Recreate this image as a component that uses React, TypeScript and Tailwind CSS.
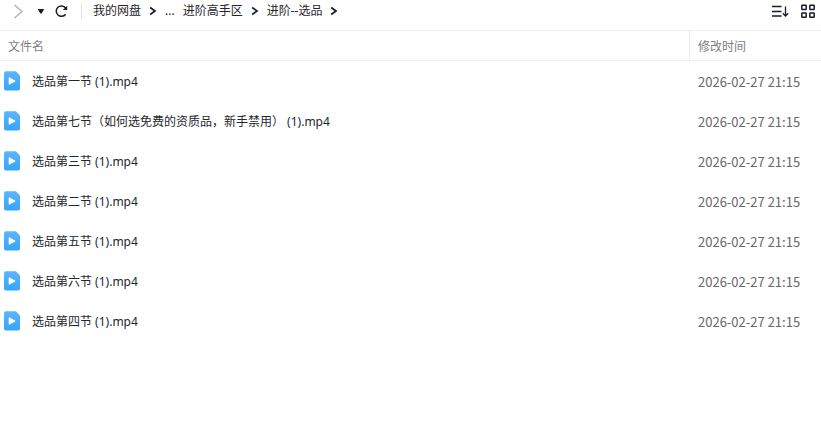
import React from 'react';

type FileItem = {
  name: string;
  modified: string;
};

const files: FileItem[] = [
  { name: '选品第一节 (1).mp4', modified: '2026-02-27 21:15' },
  { name: '选品第七节（如何选免费的资质品，新手禁用） (1).mp4', modified: '2026-02-27 21:15' },
  { name: '选品第三节 (1).mp4', modified: '2026-02-27 21:15' },
  { name: '选品第二节 (1).mp4', modified: '2026-02-27 21:15' },
  { name: '选品第五节 (1).mp4', modified: '2026-02-27 21:15' },
  { name: '选品第六节 (1).mp4', modified: '2026-02-27 21:15' },
  { name: '选品第四节 (1).mp4', modified: '2026-02-27 21:15' },
];

const crumbs = ['我的网盘', '...', '进阶高手区', '进阶--选品'];

const VideoIcon = () => (
  <svg className="shrink-0" width="16" height="20" viewBox="0 0 16 20" aria-hidden="true">
    <defs>
      <linearGradient id="video-fill" x1="0" y1="0" x2="0" y2="1">
        <stop offset="0" stopColor="#5cb6ff" />
        <stop offset="1" stopColor="#35a4fc" />
      </linearGradient>
    </defs>
    <path
      d="M2 .3H11.2a1.6 1.6 0 0 1 1.2.5l3.1 3.1a1.6 1.6 0 0 1 .5 1.2V17.5a2 2 0 0 1-2 2H2a2 2 0 0 1-2-2V2.3a2 2 0 0 1 2-2Z"
      fill="url(#video-fill)"
    />
    <path d="M4.7 6.9v6a.6.6 0 0 0 .9.5l5.4-3a.6.6 0 0 0 0-1l-5.4-3a.6.6 0 0 0-.9.5Z" fill="#fff" />
  </svg>
);

const CrumbArrow = () => (
  <svg width="8" height="10" viewBox="0 0 8 10" fill="none" aria-hidden="true">
    <path d="M1.2 1.5 6 5 1.2 8.5" stroke="#171b2b" strokeWidth="1.7" />
  </svg>
);

const Toolbar = () => (
  <header className="flex items-center border-b border-[#ececee] pb-2 pl-3 pr-[5px]">
    <button type="button" aria-label="前进" className="flex h-[22px] w-3 items-center justify-center">
      <svg width="12" height="16" viewBox="0 0 12 16" fill="none">
        <path d="M2.5 2 10 8.5 2.5 15" stroke="#b4b4b8" strokeWidth="1.5" />
      </svg>
    </button>
    <button type="button" aria-label="历史记录" className="ml-[11px] flex h-[22px] w-3 items-center justify-center">
      <svg width="8" height="6" viewBox="0 0 8 6">
        <path d="M.8 1h6.4L4.6 5.6h-1.2Z" fill="#171b2b" />
      </svg>
    </button>
    <button type="button" aria-label="刷新" className="ml-1.5 flex h-[22px] w-4 items-center justify-center">
      <svg width="14" height="14" viewBox="0 0 14 14" fill="none">
        <path d="M11.6 10.2A5.2 5.2 0 1 1 11.6 4" stroke="#171b2b" strokeWidth="1.5" />
        <path d="M13.2 1.8v4.2H8.9Z" fill="#171b2b" />
      </svg>
    </button>
    <div className="ml-3 h-4 w-px bg-[#e1e1e4]" />
    <nav aria-label="路径" className="ml-[11px] flex-1">
      <ol className="flex items-center gap-2">
        {crumbs.map((crumb) => (
          <li key={crumb} className="flex items-center gap-2">
            <a href="#" className="whitespace-nowrap text-[#25262b]">
              {crumb}
            </a>
            {crumb !== '...' && <CrumbArrow />}
          </li>
        ))}
      </ol>
    </nav>
    <button type="button" aria-label="排序" className="flex h-[22px] w-[18px] items-center justify-center">
      <svg width="18" height="14" viewBox="0 0 18 14" fill="none" stroke="#171b2b">
        <path d="M0 2.5h9.5M0 7.5h9.5M0 12h9.5" strokeWidth="1.4" />
        <path d="M13.5 2.5v9.5M10.8 9.2l2.7 2.8 2.7-2.8" strokeWidth="1.3" />
      </svg>
    </button>
    <button type="button" aria-label="网格视图" className="ml-2.5 flex h-[22px] w-4 items-center justify-center">
      <svg width="16" height="14" viewBox="0 0 16 14" fill="none" stroke="#171b2b" strokeWidth="1.5">
        <rect x="1.8" y="1.3" width="4.4" height="4.2" rx=".5" />
        <rect x="9.8" y="1.3" width="4.4" height="4.2" rx=".5" />
        <rect x="1.8" y="9" width="4.4" height="4.2" rx=".5" />
        <rect x="9.8" y="9" width="4.4" height="4.2" rx=".5" />
      </svg>
    </button>
  </header>
);

const FileTable = () => (
  <table className="w-full table-fixed border-separate border-spacing-0 text-left">
    <thead className="text-[#7d7e85]">
      <tr>
        <th scope="col" className="h-[30px] border-b border-[#f0f0f2] pl-2 pt-0.5 font-normal">
          文件名
        </th>
        <th scope="col" className="h-[30px] w-[132px] border-b border-l border-[#ececee] pl-2 pt-0.5 font-normal">
          修改时间
        </th>
      </tr>
    </thead>
    <tbody>
      {files.map((file) => (
        <tr key={file.name}>
          <td className="h-10 pl-1 text-[#25262b]">
            <div className="flex items-center gap-3">
              <VideoIcon />
              <span className="truncate pt-0.5">{file.name}</span>
            </div>
          </td>
          <td className="h-10 whitespace-nowrap pl-[9px] pt-0.5 font-['Noto_Sans_CJK_SC',sans-serif] text-[13px] text-[#66666b]">
            {file.modified}
          </td>
        </tr>
      ))}
    </tbody>
  </table>
);

const App = () => {
  return (
    <div className="min-h-screen bg-white font-['Noto_Sans','Noto_Sans_CJK_SC',sans-serif] text-xs">
      <Toolbar />
      <FileTable />
    </div>
  );
};

export default App;
